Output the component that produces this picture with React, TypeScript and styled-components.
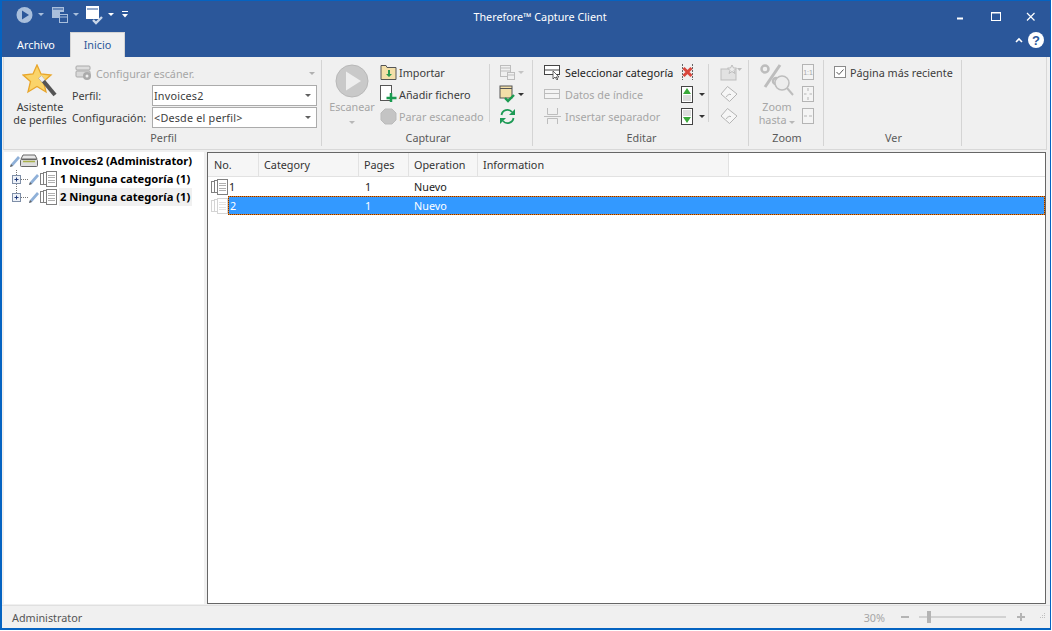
import React from "react";
import styled, { createGlobalStyle } from "styled-components";

const Global = createGlobalStyle`
  html, body { margin: 0; padding: 0; background: #fff; overflow: hidden; }
  #root { width: 1052px; height: 631px; }
  * { box-sizing: border-box; }
`;

const Win = styled.div`
  width: 1051px; height: 630px; display: flex; flex-direction: column;
  background: #f0f0f0; border: 1px solid #0563c1; border-left-width: 2px; border-bottom-width: 2px;
  font-family: "Noto Sans", sans-serif; font-size: 10.8px; color: #3c3c3c; overflow: hidden;
`;
const TitleBar = styled.div`
  height: 31px; flex: none; background: #2b579a; display: grid; grid-template-columns: 1fr auto 1fr; align-items: center; color: #fff;
`;
const Quick = styled.div`display: flex; align-items: center; padding: 0 0 4px 14px;`;
const QIcon = styled.span<{ $ml?: number }>`display: flex; margin-left: ${p => p.$ml ?? 0}px;`;
const Title = styled.div`color: #fff; padding-left: 28px;`;
const Caption = styled.div`display: flex; justify-content: flex-end; align-items: center; padding-right: 2px;`;
const CapBtn = styled.div`width: 35px; height: 30px; display: flex; align-items: center; justify-content: center;`;
const TabBar = styled.div`
  height: 25px; flex: none; background: #2b579a; display: flex; align-items: flex-end;
`;
const Tab = styled.div<{ $active?: boolean }>`
  height: ${p => (p.$active ? 25 : 24)}px; width: ${p => (p.$active ? 55 : 68)}px; display: flex; align-items: center; justify-content: center;
  background: ${p => (p.$active ? "#f0f0f0" : "transparent")}; color: ${p => (p.$active ? "#2b579a" : "#fff")};
  border: ${p => (p.$active ? "1px solid #d4d4d4" : "none")}; border-bottom: none; padding-bottom: 1px;
`;
const HelpArea = styled.div`margin-left: auto; display: flex; align-items: center; gap: 5px; height: 24px; padding-right: 6px; margin-bottom: 5px;`;
const Ribbon = styled.div`
  height: 93px; flex: none; display: flex; margin: 0 3px 0 1px; background: #f0f0f0; border: 1px solid #d8d8d8; border-top: none; padding: 3px 0;
`;
const Group = styled.div<{ $w: number }>`
  width: ${p => p.$w}px; flex: none; display: flex; flex-direction: column; border-right: 1px solid #d4d4d4;
`;
const GroupBody = styled.div`flex: 1; display: flex; min-height: 0;`;
const GroupLabel = styled.div`height: 17px; flex: none; text-align: center; color: #5a5a5a; line-height: 17px; padding-left: 2px;`;
const Big = styled.div<{ $w: number; $dis?: boolean; $ml?: number }>`
  width: ${p => p.$w}px; margin-left: ${p => p.$ml ?? 0}px; flex: none; display: flex; flex-direction: column; align-items: center; text-align: center; line-height: 13px;
  color: ${p => (p.$dis ? "#a6a6a6" : "#3c3c3c")}; padding-top: 4px;
  & > svg { margin-bottom: 2px; }
`;
const BigLabel = styled.div`white-space: nowrap;`;
const BigArrow = styled.span`margin-top: 5px; line-height: 3px;`;
const Col = styled.div<{ $w: number; $ml?: number; $pt?: number }>`
  width: ${p => p.$w}px; margin-left: ${p => p.$ml ?? 0}px; flex: none; display: flex; flex-direction: column; padding-top: ${p => p.$pt ?? 1}px;
`;
const Row = styled.div<{ $dis?: boolean; $strong?: boolean }>`
  height: 22px; flex: none; display: flex; align-items: center; gap: 2px; white-space: nowrap;
  color: ${p => (p.$dis ? "#a6a6a6" : p.$strong ? "#222" : "#3c3c3c")};
`;
const ScanRow = styled(Row)`padding-left: 3px; gap: 3px;`;
const CheckRow = styled(Row)`gap: 3px;`;
const PushRight = styled.span`margin-left: auto; margin-right: 3px; display: flex;`;
const ArrowGap = styled.span`margin-left: 4px; display: flex;`;
const Sep = styled.div<{ $ml: number }>`
  width: 1px; flex: none; background: #d4d4d4; height: 58px; margin: 4px 0 0 ${p => p.$ml}px;
`;
const FieldLabel = styled.div`width: 78px; flex: none;`;
const Combo = styled.div`
  width: 165px; height: 21px; flex: none; background: #fff; border: 1px solid #ababab; display: flex; align-items: center; justify-content: space-between; padding: 0 5px 0 1px; letter-spacing: .2px;
`;
const Arrow = styled.span<{ $c?: string; $ml?: number }>`
  display: inline-block; width: 0; height: 0; flex: none; margin-left: ${p => p.$ml ?? 0}px;
  border-left: 3px solid transparent; border-right: 3px solid transparent; border-top: 3px solid ${p => p.$c ?? "#606060"};
`;
const Main = styled.div`flex: 1; min-height: 0; display: flex; gap: 2px; padding: 2px 4px 1px 2px;`;
const Tree = styled.div`width: 200px; flex: none; background: #fff; font-size: 11.2px;`;
const TreeRow = styled.div<{ $indent: number }>`
  height: 18px; display: flex; align-items: center; padding-left: ${p => p.$indent}px; font-weight: 700; color: #000; white-space: nowrap;
`;
const TreeGap = styled.span`width: 1px; flex: none;`;
const TreeText = styled.span<{ $hl?: boolean }>`
  margin-left: 2px; padding: 0 2px 0 1px; height: 18px; line-height: 18px; background: ${p => (p.$hl ? "#f0f0f0" : "transparent")};
`;
const List = styled.div`flex: 1; min-width: 0; background: #fff; border: 1px solid #666; margin-left: 1px;`;
const Head = styled.div`height: 24px; display: flex; background: #f6f6f6; border-bottom: 1px solid #e2e2e2; padding-left: 1px;`;
const HeadCell = styled.div<{ $w: number }>`
  width: ${p => p.$w}px; flex: none; padding-left: 5px; line-height: 23px; color: #333; border-right: 1px solid #e2e2e2;
`;
const HeadFill = styled.div`flex: 1; background: #fff;`;
const LRow = styled.div`height: 19px; display: flex; align-items: center; color: #222;`;
const IconCell = styled.div`width: 20px; flex: none; display: flex; padding-left: 3px;`;
const Selected = styled.div`
  flex: 1; height: 19px; display: flex; align-items: center; color: #fff; border: 1px dotted #7a3000;
  background: linear-gradient(#3399ff, #3399ff) padding-box, #e8821e border-box;
`;
const Plain = styled.div`flex: 1; display: flex; align-items: center;`;
const Cell = styled.div<{ $w: number; $pl?: number }>`width: ${p => p.$w}px; flex: none; padding-left: ${p => p.$pl ?? 1}px;`;
const Status = styled.div`
  height: 23px; flex: none; display: flex; align-items: center; padding-left: 10px; color: #555; border-top: 1px solid #e0e0e0;
`;
const StatusRight = styled.div`margin-left: auto; display: flex; align-items: center; color: #a6a6a6; padding-right: 3px;`;
const Pct = styled.span`margin-right: 16px;`;
const Grip = styled.svg`margin-left: 4px;`;
const TreeIcon = styled.svg`flex: none;`;

const QPlay = () => (
  <svg width="18" height="18" viewBox="0 0 18 18"><circle cx="8.500" cy="9" r="8" fill="#a9bfdc" /><path d="M6 4.500 13 9 6 13.500z" fill="#2b579a" /></svg>
);
const QDoc = () => (
  <svg width="18" height="18" viewBox="0 0 18 18"><path d="M1 1h12v5H9v6H1z" fill="#a9bfdc" /><path d="M2 3h10" stroke="#2b579a" /><rect x="8.500" y="8.500" width="8" height="8" fill="#2b579a" stroke="#a9bfdc" /><path d="M8 11h9" stroke="#a9bfdc" /></svg>
);
const QCheck = () => (
  <svg width="18" height="20" viewBox="0 0 18 20"><rect x="1" y="1" width="13" height="13" fill="#fff" /><path d="M2 4h11" stroke="#2b579a" /><path d="M8 15l3 3 6-6" stroke="#c9d6e8" strokeWidth="2.400" fill="none" /></svg>
);
const QMore = () => (
  <svg width="6" height="8" viewBox="0 0 6 8"><path d="M0 .5h6" stroke="#fff" /><path d="M0 3h6L3 6.500z" fill="#fff" /></svg>
);
const Star = () => (
  <svg width="36" height="34" viewBox="0 0 36 34">
    <path d="M13 1l4 9 10 1-7.500 6.500L22 28l-9-5.500L4 28l2.500-10.500L-1 11l10-1z" transform="translate(2 0)" fill="#fad46a" stroke="#e8a52a" strokeWidth="1.300" />
    <path d="M18 13L33 31" stroke="#555" strokeWidth="4" /><path d="M18 13l3.500 4" stroke="#eee" strokeWidth="4" />
  </svg>
);
const Scanner = () => (
  <svg width="18" height="16" viewBox="0 0 18 16"><rect x="1" y="1" width="14" height="4" rx="1" fill="#ddd" stroke="#aaa" /><rect x="1" y="6" width="14" height="6" rx="1" fill="#d8d8d8" stroke="#aaa" /><circle cx="12" cy="11" r="4" fill="#aaa" /><circle cx="12" cy="11" r="1.500" fill="#eee" /></svg>
);
const PlayBig = () => (
  <svg width="34" height="34" viewBox="0 0 34 34"><circle cx="17" cy="17" r="16" fill="#c9c9c9" stroke="#b8b8b8" /><path d="M11 7.500 26 17 11 26.500z" fill="#eee" /></svg>
);
const Folder = () => (
  <svg width="17" height="17" viewBox="0 0 17 17"><path d="M1 1.500h5l1 2h9v12H1z" fill="#f3dfa8" stroke="#555" /><path d="M8 6v4H6l3 3 3-3h-2V6z" fill="#2a9a50" /></svg>
);
const AddFile = () => (
  <svg width="17" height="18" viewBox="0 0 17 18"><rect x=".5" y=".5" width="11" height="15" fill="#fff" stroke="#555" /><path d="M11 8v9M6.500 13h10" stroke="#1a9a50" strokeWidth="2.500" /></svg>
);
const Stop = () => (
  <svg width="17" height="17" viewBox="0 0 17 17"><path d="M5 1h7l4 4v7l-4 4H5l-4-4V5z" fill="#c4c4c4" stroke="#bbb" /></svg>
);
const Pages2 = () => (
  <svg width="17" height="17" viewBox="0 0 17 17" fill="#f0f0f0" stroke="#bdbdbd"><rect x="1.500" y="1.500" width="10" height="11" /><path d="M2 4h9M2 7h9" /><rect x="8.500" y="8.500" width="7" height="7" /><path d="M9 11h6" /></svg>
);
const NoteCheck = () => (
  <svg width="17" height="19" viewBox="0 0 17 19"><rect x="1" y="1" width="12" height="12" fill="#f3dfa8" stroke="#555" /><path d="M1 3.500h12" stroke="#555" /><path d="M6 13l3 3 6-6" stroke="#1a9a50" strokeWidth="2.400" fill="none" /></svg>
);
const Refresh = () => (
  <svg width="17" height="17" viewBox="0 0 17 17" fill="none" stroke="#1d9a55" strokeWidth="1.800"><path d="M2.500 7A6 6 0 0 1 13 4" /><path d="M14.500 10A6 6 0 0 1 4 13" /><path d="M16 1v6h-6z" fill="#1d9a55" stroke="none" /><path d="M1 16v-6h6z" fill="#1d9a55" stroke="none" /></svg>
);
const SelectIcon = () => (
  <svg width="20" height="16" viewBox="0 0 20 16"><rect x="1.500" y="1.500" width="15" height="9" fill="#fff" stroke="#444" /><path d="M1 6h16" stroke="#444" /><path d="M10 7v8l2-2 2 3 1-1-2-2h3z" fill="#fff" stroke="#444" strokeWidth=".8" /></svg>
);
const Index = () => (
  <svg width="20" height="16" viewBox="0 0 20 16" fill="none" stroke="#bdbdbd"><rect x="1.500" y="3.500" width="15" height="9" fill="#f4f4f4" /><path d="M1 7.500h16" /></svg>
);
const Separator = () => (
  <svg width="20" height="18" viewBox="0 0 20 18" fill="none" stroke="#bdbdbd"><path d="M4.500 1v6.500h10V1M1 9.500h17M4.500 17v-5.500h10V17" /></svg>
);
const DelDoc = () => (
  <svg width="13" height="18" viewBox="0 0 13 18"><path d="M1.500 1v16M11.500 1v16" stroke="#666" strokeDasharray="2 1" /><path d="M2.500 5l8 8M10.500 5l-8 8" stroke="#d8463c" strokeWidth="3" /></svg>
);
const Move = ({ up }: { up?: boolean }) => (
  <svg width="12" height="17" viewBox="0 0 12 17">
    <rect x=".5" y=".5" width="11" height="16" fill="#fff" stroke="#444" />
    {up ? <path d="M6 2l4 6H2z" fill="#3aa93a" /> : <path d="M6 15l4-6H2z" fill="#3aa93a" />}
    {(up ? [10, 12, 14] : [3, 5, 7]).map(y => <path key={y} d={`M2 ${y}h8`} stroke="#bbb" />)}
  </svg>
);
const Photo = () => (
  <svg width="24" height="17" viewBox="0 0 24 17"><rect x="1" y="5" width="15" height="11" fill="#e2e2e2" stroke="#bdbdbd" /><path d="M12 1l1.500 3h3l-2.500 2.500 1 3-3-2-3 2 1-3L7.500 4h3z" fill="#ececec" stroke="#bdbdbd" /><path d="M17 4h5l-2.500 3z" fill="#bdbdbd" /></svg>
);
const Diamond = () => (
  <svg width="18" height="18" viewBox="0 0 18 18" fill="#f6f6f6" stroke="#b4b4b4"><path d="M7.500 1.500 17 9l-7.500 7.500L1 9z" /><path d="M6.500 12c0-2 2-2 3.500-3l1 1" fill="none" /></svg>
);
const ZoomBig = () => (
  <svg width="34" height="34" viewBox="0 0 34 34" fill="none" stroke="#bdbdbd"><circle cx="5" cy="5" r="3.500" strokeWidth="2.500" /><path d="M20 1 5 23" strokeWidth="3" /><circle cx="16" cy="17" r="3" strokeWidth="2.500" /><circle cx="22" cy="19" r="7" fill="#ededed" strokeWidth="1.500" /><path d="M27 24l6 7" strokeWidth="2" /></svg>
);
const ZoomSmall = ({ k }: { k: number }) => (
  <svg width="12" height="16" viewBox="0 0 12 16" fill="none" stroke="#b4b4b4"><rect x=".5" y=".5" width="11" height="15" fill="#f4f4f4" />
    {k === 0 && <text x="6" y="10.500" textAnchor="middle" fontSize="7" fontFamily="Liberation Sans" fill="#a8a8a8" stroke="none">1:1</text>}
    {k === 1 && <path d="M6 2v3M6 11v3M2 8h2.500M7.500 8H10" />}
    {k === 2 && <path d="M2 8h3M7 8h3" />}
  </svg>
);
const Expander = ({ last }: { last?: boolean }) => (
  <TreeIcon width="16" height="18" viewBox="0 0 16 18">
    <path d={`M4.500 0V5${last ? "" : "M4.500 14V18"}M9 9.500h7`} stroke="#777" strokeDasharray="1 1" fill="none" />
    <rect x=".5" y="5.500" width="8" height="8" fill="#eef2f8" stroke="#7f8fa8" />
    <path d="M2.500 9.500h4M4.500 7.500v4" stroke="#223a7a" />
  </TreeIcon>
);
const Pencil = () => (
  <TreeIcon width="11" height="13" viewBox="0 0 11 13"><path d="M1 12l1-3 7-8 2 2-7 8z" fill="#8fb0d8" /><path d="M1 12l1-3 2 2z" fill="#666" /></TreeIcon>
);
const DocStack = ({ faded }: { faded?: boolean }) => {
  const s = faded ? "#d4d4d4" : "#808080";
  return (
    <TreeIcon width="17" height="16" viewBox="0 0 17 16" fill="#fff" stroke={s} shapeRendering="crispEdges">
      <rect x=".5" y="2.500" width="8" height="11" /><rect x="3.500" y="1.500" width="8" height="12" /><rect x="6.500" y=".5" width="10" height="15" />
      <path d="M8 4h7M8 6.500h7M8 9h7M8 11.500h7" stroke={faded ? "#e2e2e2" : "#b0b0b0"} />
    </TreeIcon>
  );
};
const ScannerRoot = () => (
  <TreeIcon width="18" height="14" viewBox="0 0 18 14"><path d="M3 1h12l2 4H1z" fill="#e8e8e8" stroke="#666" /><rect x=".5" y="5.500" width="17" height="7" rx="1" fill="#ddd" stroke="#666" /><path d="M3 7.500h12" stroke="#a8b04a" strokeWidth="1.500" /></TreeIcon>
);

const cols = [50, 100, 50, 69, 251];

export default function App() {
  return (
    <Win>
      <Global />
      <TitleBar>
        <Quick>
          <QIcon><QPlay /></QIcon><Arrow $c="#a9bfdc" $ml={4} />
          <QIcon $ml={7}><QDoc /></QIcon><Arrow $c="#a9bfdc" $ml={4} />
          <QIcon $ml={6}><QCheck /></QIcon><Arrow $c="#fff" $ml={5} />
          <QIcon $ml={8}><QMore /></QIcon>
        </Quick>
        <Title>Therefore™ Capture Client</Title>
        <Caption>
          <CapBtn><svg width="10" height="10" viewBox="0 0 10 10"><path d="M1 6.500h6" stroke="#fff" strokeWidth="2" /></svg></CapBtn>
          <CapBtn><svg width="10" height="10" viewBox="0 0 10 10"><rect x=".5" y=".5" width="9" height="8" fill="none" stroke="#fff" /><path d="M0 1h10" stroke="#fff" /></svg></CapBtn>
          <CapBtn><svg width="10" height="10" viewBox="0 0 10 10"><path d="M1 1l7.500 7.500M8.500 1 1 8.500" stroke="#fff" strokeWidth="1.200" /></svg></CapBtn>
        </Caption>
      </TitleBar>
      <TabBar>
        <Tab>Archivo</Tab>
        <Tab $active>Inicio</Tab>
        <HelpArea>
          <svg width="8" height="6" viewBox="0 0 8 6"><path d="M1 5l3-3 3 3" stroke="#fff" strokeWidth="1.600" fill="none" /></svg>
          <svg width="16" height="16" viewBox="0 0 16 16"><circle cx="8" cy="8" r="8" fill="#fff" /><text x="8" y="12.500" textAnchor="middle" fontSize="13" fontWeight="700" fontFamily="Liberation Sans" fill="#2b579a">?</text></svg>
        </HelpArea>
      </TabBar>
      <Ribbon>
        <Group $w={318}>
          <GroupBody>
            <Big $w={60} $ml={6}><Star /><BigLabel>Asistente</BigLabel><BigLabel>de perfiles</BigLabel></Big>
            <Col $w={246} $ml={2} $pt={2}>
              <ScanRow $dis><Scanner /><span>Configurar escáner.</span><PushRight><Arrow $c="#b0b0b0" /></PushRight></ScanRow>
              <Row><FieldLabel>Perfil:</FieldLabel><Combo>Invoices2<Arrow /></Combo></Row>
              <Row><FieldLabel>Configuración:</FieldLabel><Combo>&lt;Desde el perfil&gt;<Arrow /></Combo></Row>
            </Col>
          </GroupBody>
          <GroupLabel>Perfil</GroupLabel>
        </Group>
        <Group $w={211}>
          <GroupBody>
            <Big $w={50} $ml={5} $dis><PlayBig /><BigLabel>Escanear</BigLabel><BigArrow><Arrow $c="#b8b8b8" /></BigArrow></Big>
            <Col $w={105} $ml={3}>
              <Row><Folder /><span>Importar</span></Row>
              <Row><AddFile /><span>Añadir fichero</span></Row>
              <Row $dis><Stop /><span>Parar escaneado</span></Row>
            </Col>
            <Sep $ml={4} />
            <Col $w={30} $ml={9}>
              <Row><Pages2 /><Arrow $c="#c4c4c4" /></Row>
              <Row><NoteCheck /><Arrow $c="#333" /></Row>
              <Row><Refresh /></Row>
            </Col>
          </GroupBody>
          <GroupLabel>Capturar</GroupLabel>
        </Group>
        <Group $w={216}>
          <GroupBody>
            <Col $w={136} $ml={10}>
              <Row $strong><SelectIcon /><span>Seleccionar categoría</span></Row>
              <Row $dis><Index /><span>Datos de índice</span></Row>
              <Row $dis><Separator /><span>Insertar separador</span></Row>
            </Col>
            <Col $w={26} $ml={2}>
              <Row><DelDoc /></Row>
              <Row><Move up /><ArrowGap><Arrow $c="#333" /></ArrowGap></Row>
              <Row><Move /><ArrowGap><Arrow $c="#333" /></ArrowGap></Row>
            </Col>
            <Sep $ml={1} />
            <Col $w={26} $ml={11}>
              <Row><Photo /></Row>
              <Row><Diamond /></Row>
              <Row><Diamond /></Row>
            </Col>
          </GroupBody>
          <GroupLabel>Editar</GroupLabel>
        </Group>
        <Group $w={75}>
          <GroupBody>
            <Big $w={44} $ml={6} $dis><ZoomBig /><BigLabel>Zoom</BigLabel><BigLabel>hasta <Arrow $c="#b8b8b8" /></BigLabel></Big>
            <Col $w={14} $ml={3}>
              <Row><ZoomSmall k={0} /></Row>
              <Row><ZoomSmall k={1} /></Row>
              <Row><ZoomSmall k={2} /></Row>
            </Col>
          </GroupBody>
          <GroupLabel>Zoom</GroupLabel>
        </Group>
        <Group $w={138}>
          <GroupBody>
            <Col $w={130} $ml={10}>
              <CheckRow>
                <svg width="13" height="13" viewBox="0 0 13 13"><rect x=".5" y=".5" width="11" height="11" fill="#fff" stroke="#8a8a8a" /><path d="M2.500 6l2.500 2.500 4.500-5" stroke="#555" fill="none" /></svg>
                <span>Página más reciente</span>
              </CheckRow>
            </Col>
          </GroupBody>
          <GroupLabel>Ver</GroupLabel>
        </Group>
      </Ribbon>
      <Main>
        <Tree>
          <TreeRow $indent={5}><Pencil /><ScannerRoot /><TreeText>1 Invoices2 (Administrator)</TreeText></TreeRow>
          <TreeRow $indent={8}><Expander /><Pencil /><TreeGap /><DocStack /><TreeText>1 Ninguna categoría (1)</TreeText></TreeRow>
          <TreeRow $indent={8}><Expander last /><Pencil /><TreeGap /><DocStack /><TreeText $hl>2 Ninguna categoría (1)</TreeText></TreeRow>
        </Tree>
        <List>
          <Head>
            <HeadCell $w={cols[0]}>No.</HeadCell>
            <HeadCell $w={cols[1]}>Category</HeadCell>
            <HeadCell $w={cols[2]}>Pages</HeadCell>
            <HeadCell $w={cols[3]}>Operation</HeadCell>
            <HeadCell $w={cols[4]}>Information</HeadCell>
            <HeadFill />
          </Head>
          <LRow>
            <IconCell><DocStack /></IconCell>
            <Plain><Cell $w={30}>1</Cell><Cell $w={105} /><Cell $w={50} $pl={2}>1</Cell><Cell $w={70}>Nuevo</Cell></Plain>
          </LRow>
          <LRow>
            <IconCell><DocStack faded /></IconCell>
            <Selected><Cell $w={30}>2</Cell><Cell $w={104} /><Cell $w={50} $pl={2}>1</Cell><Cell $w={70}>Nuevo</Cell></Selected>
          </LRow>
        </List>
      </Main>
      <Status>
        Administrator
        <StatusRight>
          <Pct>30%</Pct>
          <svg width="130" height="14" viewBox="0 0 130 14">
            <path d="M0 7h8" stroke="#b4b4b4" strokeWidth="2" />
            <path d="M18 7h87" stroke="#b4b4b4" />
            <rect x="26" y="1" width="4" height="12" fill="#b4b4b4" />
            <path d="M116 7h8M120 3v8" stroke="#b4b4b4" strokeWidth="2" />
          </svg>
          <Grip width="12" height="12" viewBox="0 0 12 12" fill="#c0c0c0"><rect x="9" y="2" width="1" height="1" /><rect x="7" y="4" width="1" height="1" /><rect x="9" y="4" width="1" height="1" /><rect x="5" y="6" width="1" height="1" /><rect x="7" y="6" width="1" height="1" /><rect x="9" y="6" width="1" height="1" /></Grip>
        </StatusRight>
      </Status>
    </Win>
  );
}
